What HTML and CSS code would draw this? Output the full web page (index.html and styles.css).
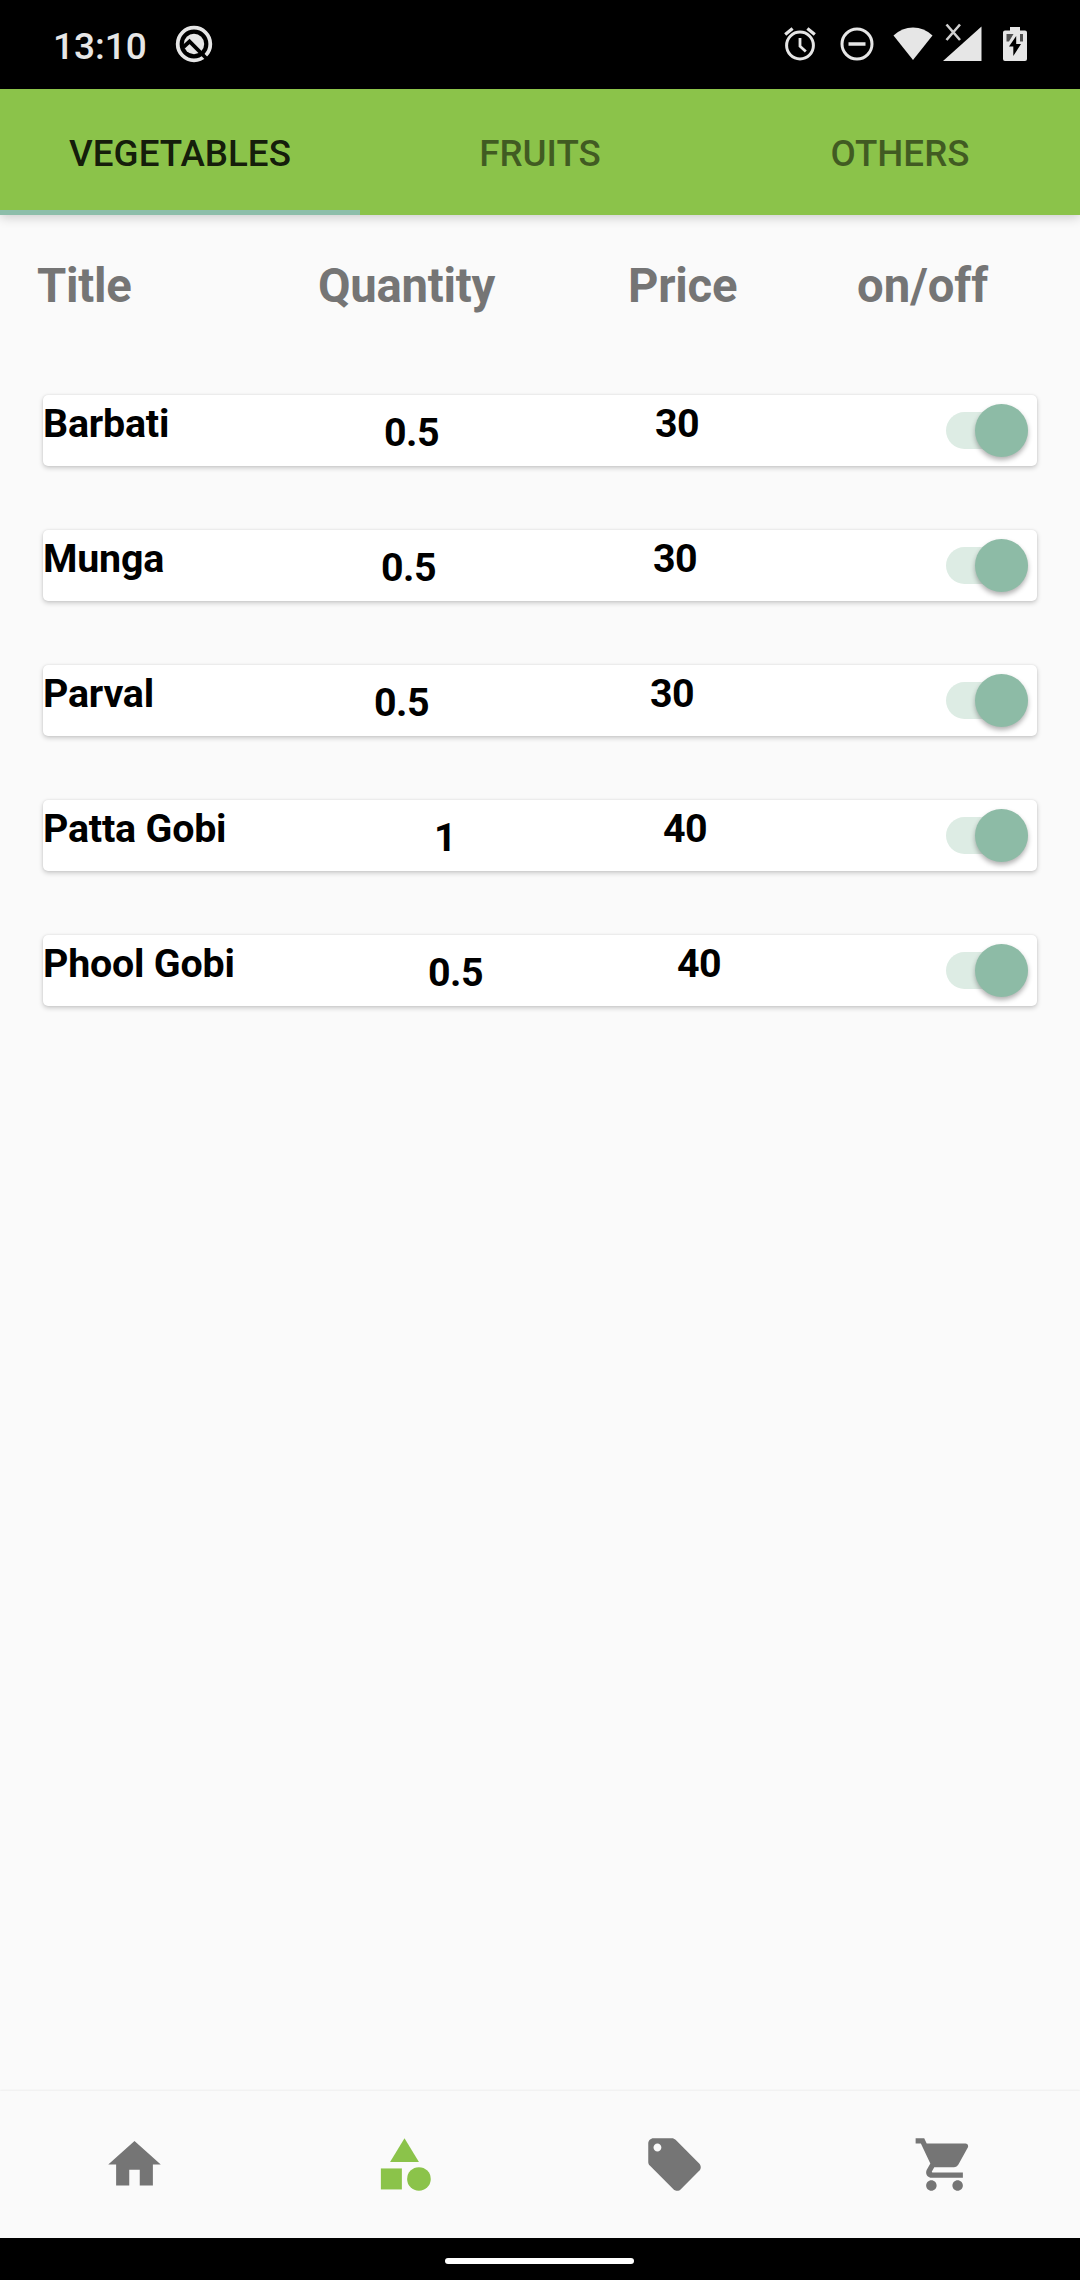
FILE: index.html
```html
<!DOCTYPE html>
<html lang="en">
<head>
<meta charset="utf-8">
<title>Inventory</title>
<link rel="stylesheet" href="styles.css">
</head>
<body>
<div class="screen">
  <header class="status">
    <span class="clock">13:10</span>
    <svg class="ic-app" viewBox="0 0 38 38" width="38" height="38"><circle cx="19" cy="19" r="16.300" fill="none" stroke="#e6e6e6" stroke-width="3.800"/><circle cx="19" cy="19" r="10.200" fill="#e6e6e6"/><path d="M8.500 22L14.500 16.500L33 35" fill="none" stroke="#000" stroke-width="3.800"/></svg>
    <div class="status-icons">
      <svg class="ic-alarm" viewBox="0 0 32 34" width="32" height="34" fill="none" stroke="#e6e6e6"><circle cx="16" cy="18.500" r="13.400" stroke-width="3"/><path d="M1.200 7.600L8.600 1.400M30.800 7.600L23.400 1.400" stroke-width="3.200"/><path d="M16 11v8.200l5.800 5.400" stroke-width="2.800"/></svg>
      <svg class="ic-dnd" viewBox="0 0 34 34" width="34" height="34" fill="none" stroke="#e6e6e6"><circle cx="17" cy="17" r="15" stroke-width="3"/><path d="M8.500 17h17" stroke-width="3.500"/></svg>
      <svg class="ic-wifi" viewBox="0 0 40 34" width="40" height="34"><path d="M20 33L.5 8.500Q9 .5 20 .5t19.500 8z" fill="#e6e6e6"/></svg>
      <svg class="ic-cell" viewBox="0 0 39 38" width="39" height="38"><path d="M38.500 3.500V38H0z" fill="#e6e6e6"/><path d="M3.500 1.500L17 17M17 1.500L3.500 17" stroke="#d0d0d0" stroke-width="2.600"/></svg>
      <svg class="ic-batt" viewBox="0 0 24 34" width="24" height="34"><path d="M7 0h10v3.500h5a2 2 0 0 1 2 2V32a2 2 0 0 1-2 2H2a2 2 0 0 1-2-2V5.500a2 2 0 0 1 2-2h5z" fill="#e6e6e6"/><path d="M3.500 7h7l-4.500 7.500H3.500zM17 7h3v7.500h-3z" fill="#505050"/><path d="M13.200 9v8h4.800L10.300 29v-9.500H6z" fill="#000"/></svg>
    </div>
  </header>
  <nav class="tabs">
    <div class="tab active">VEGETABLES</div>
    <div class="tab">FRUITS</div>
    <div class="tab">OTHERS</div>
  </nav>
  <main class="content">
    <div class="heads">
      <span>Title</span><span>Quantity</span><span>Price</span><span>on/off</span>
    </div>
    <div class="list">
      <div class="card barbati"><span class="name">Barbati</span><span class="qty">0.5</span><span class="price">30</span><span class="switch"><i class="thumb"></i></span></div>
      <div class="card munga"><span class="name">Munga</span><span class="qty">0.5</span><span class="price">30</span><span class="switch"><i class="thumb"></i></span></div>
      <div class="card parval"><span class="name">Parval</span><span class="qty">0.5</span><span class="price">30</span><span class="switch"><i class="thumb"></i></span></div>
      <div class="card patta"><span class="name">Patta Gobi</span><span class="qty">1</span><span class="price">40</span><span class="switch"><i class="thumb"></i></span></div>
      <div class="card phool"><span class="name">Phool Gobi</span><span class="qty">0.5</span><span class="price">40</span><span class="switch"><i class="thumb"></i></span></div>
    </div>
  </main>
  <nav class="bottom">
    <svg viewBox="0 0 24 24"><path d="M10 20v-6h4v6h5v-8h3L12 3 2 12h3v8z"/></svg>
    <svg class="on" viewBox="0 0 24 24"><path d="M12 2l-5.500 9h11z"/><circle cx="17.500" cy="17.500" r="4.500"/><path d="M3 13.500h8v8H3z"/></svg>
    <svg viewBox="0 0 24 24"><path d="M21.410 11.580l-9-9C12.050 2.220 11.550 2 11 2H4c-1.100 0-2 .9-2 2v7c0 .55.220 1.050.590 1.420l9 9c.36.360.860.580 1.410.580s1.050-.220 1.410-.590l7-7c.370-.360.590-.860.590-1.410s-.230-1.060-.590-1.420zM5.500 7C4.670 7 4 6.330 4 5.500S4.670 4 5.500 4 7 4.670 7 5.500 6.330 7 5.500 7z"/></svg>
    <svg viewBox="0 0 24 24"><path d="M7 18c-1.100 0-1.990.9-1.990 2S5.900 22 7 22s2-.9 2-2-.9-2-2-2zM1 2v2h2l3.600 7.590-1.350 2.450c-.160.280-.250.610-.250.960 0 1.100.9 2 2 2h12v-2H7.420c-.140 0-.250-.110-.250-.250l.030-.120.9-1.630h7.450c.750 0 1.410-.410 1.750-1.030l3.580-6.490c.080-.140.120-.310.120-.480 0-.550-.450-1-1-1H5.210l-.940-2H1zm16 16c-1.100 0-1.990.9-1.990 2s.890 2 1.990 2 2-.9 2-2-.9-2-2-2z"/></svg>
  </nav>
  <footer class="gesture"><div class="pill"></div></footer>
</div>
</body>
</html>
```

FILE: styles.css
```css
* { box-sizing: border-box; }
body { margin: 0; background: #fafafa; font-family: Roboto, "Noto Sans", sans-serif; }
.screen { width: 1080px; height: 2280px; display: flex; flex-direction: column; overflow: hidden; }
svg { display: block; }

.status { flex: none; height: 89px; background: #000; color: #e6e6e6; display: flex; align-items: flex-start; padding: 0 53px 0 53px; }
.clock { font-size: 37px; font-weight: 500; line-height: 44px; margin-top: 25px; width: 122px; white-space: nowrap; }
.ic-app { margin-top: 25px; }
.status-icons { margin-left: auto; display: flex; align-items: flex-start; }
.ic-alarm { margin: 27px 24px 0 0; }
.ic-dnd { margin: 27px 19px 0 0; }
.ic-wifi { margin: 27px 10px 0 0; }
.ic-cell { margin: 23px 21px 0 0; }
.ic-batt { margin: 27px 0 0; }

.tabs { flex: none; height: 126px; display: grid; grid-template-columns: repeat(3, 1fr); background: #8bc34a; box-shadow: 0 2px 11px rgba(0,0,0,.2); z-index: 1; }
.tab { font-size: 36.75px; font-weight: 500; line-height: 43px; text-align: center; padding-top: 43px; color: rgba(0,0,0,.54); border-bottom: 5px solid transparent; }
.tab.active { color: rgba(0,0,0,.87); border-bottom-color: #8dbeaa; }

.content { flex: 1; }
.heads { display: grid; grid-template-columns: 281px 310px 229px auto; padding: 43px 0 0 37px; height: 180px; font-size: 47.25px; line-height: 56px; letter-spacing: -.25px; font-weight: 700; color: #757575; }
.heads span:last-child { letter-spacing: 0; }
.list { display: flex; flex-direction: column; gap: 64px; padding: 0 43px; }
.card { height: 71px; background: #fff; border-radius: 5px; box-shadow: 0 2px 5px rgba(0,0,0,.2), 0 0 2px rgba(0,0,0,.1); display: grid; align-items: start; font-size: 39.375px; line-height: 46px; letter-spacing: -.2px; font-weight: 700; color: #000; white-space: nowrap; padding-top: 6px; }
.barbati { grid-template-columns: 341px 271px 290px 83px; }
.munga { grid-template-columns: 338px 272px 292px 83px; }
.parval { grid-template-columns: 331px 276px 295px 83px; }
.patta { grid-template-columns: 391px 229px 282px 83px; }
.phool { grid-template-columns: 385px 249px 268px 83px; }
.qty, .price { letter-spacing: -.5px; }
.qty { margin-top: 9px; }
.switch { width: 82px; height: 37px; margin: 11px 0 0 1px; border-radius: 19px; background: #ddece4; display: flex; justify-content: flex-end; align-items: center; }
.thumb { flex: none; width: 53px; height: 53px; border-radius: 50%; background: #8dbba6; box-shadow: 0 3px 5px rgba(0,0,0,.3); }

.bottom { flex: none; height: 147px; background: #fafafa; display: grid; grid-template-columns: repeat(4, 1fr); justify-items: center; align-items: center; padding-right: 1px; box-shadow: 0 -1px 2px rgba(0,0,0,.05); }
.bottom svg { width: 63px; height: 63px; fill: #757575; }
.bottom .on { fill: #8bc34a; }
.gesture { flex: none; height: 42px; background: #000; display: flex; justify-content: center; padding: 20px 1px 0 0; }
.pill { width: 189px; height: 6px; border-radius: 3px; background: #fff; }
```
